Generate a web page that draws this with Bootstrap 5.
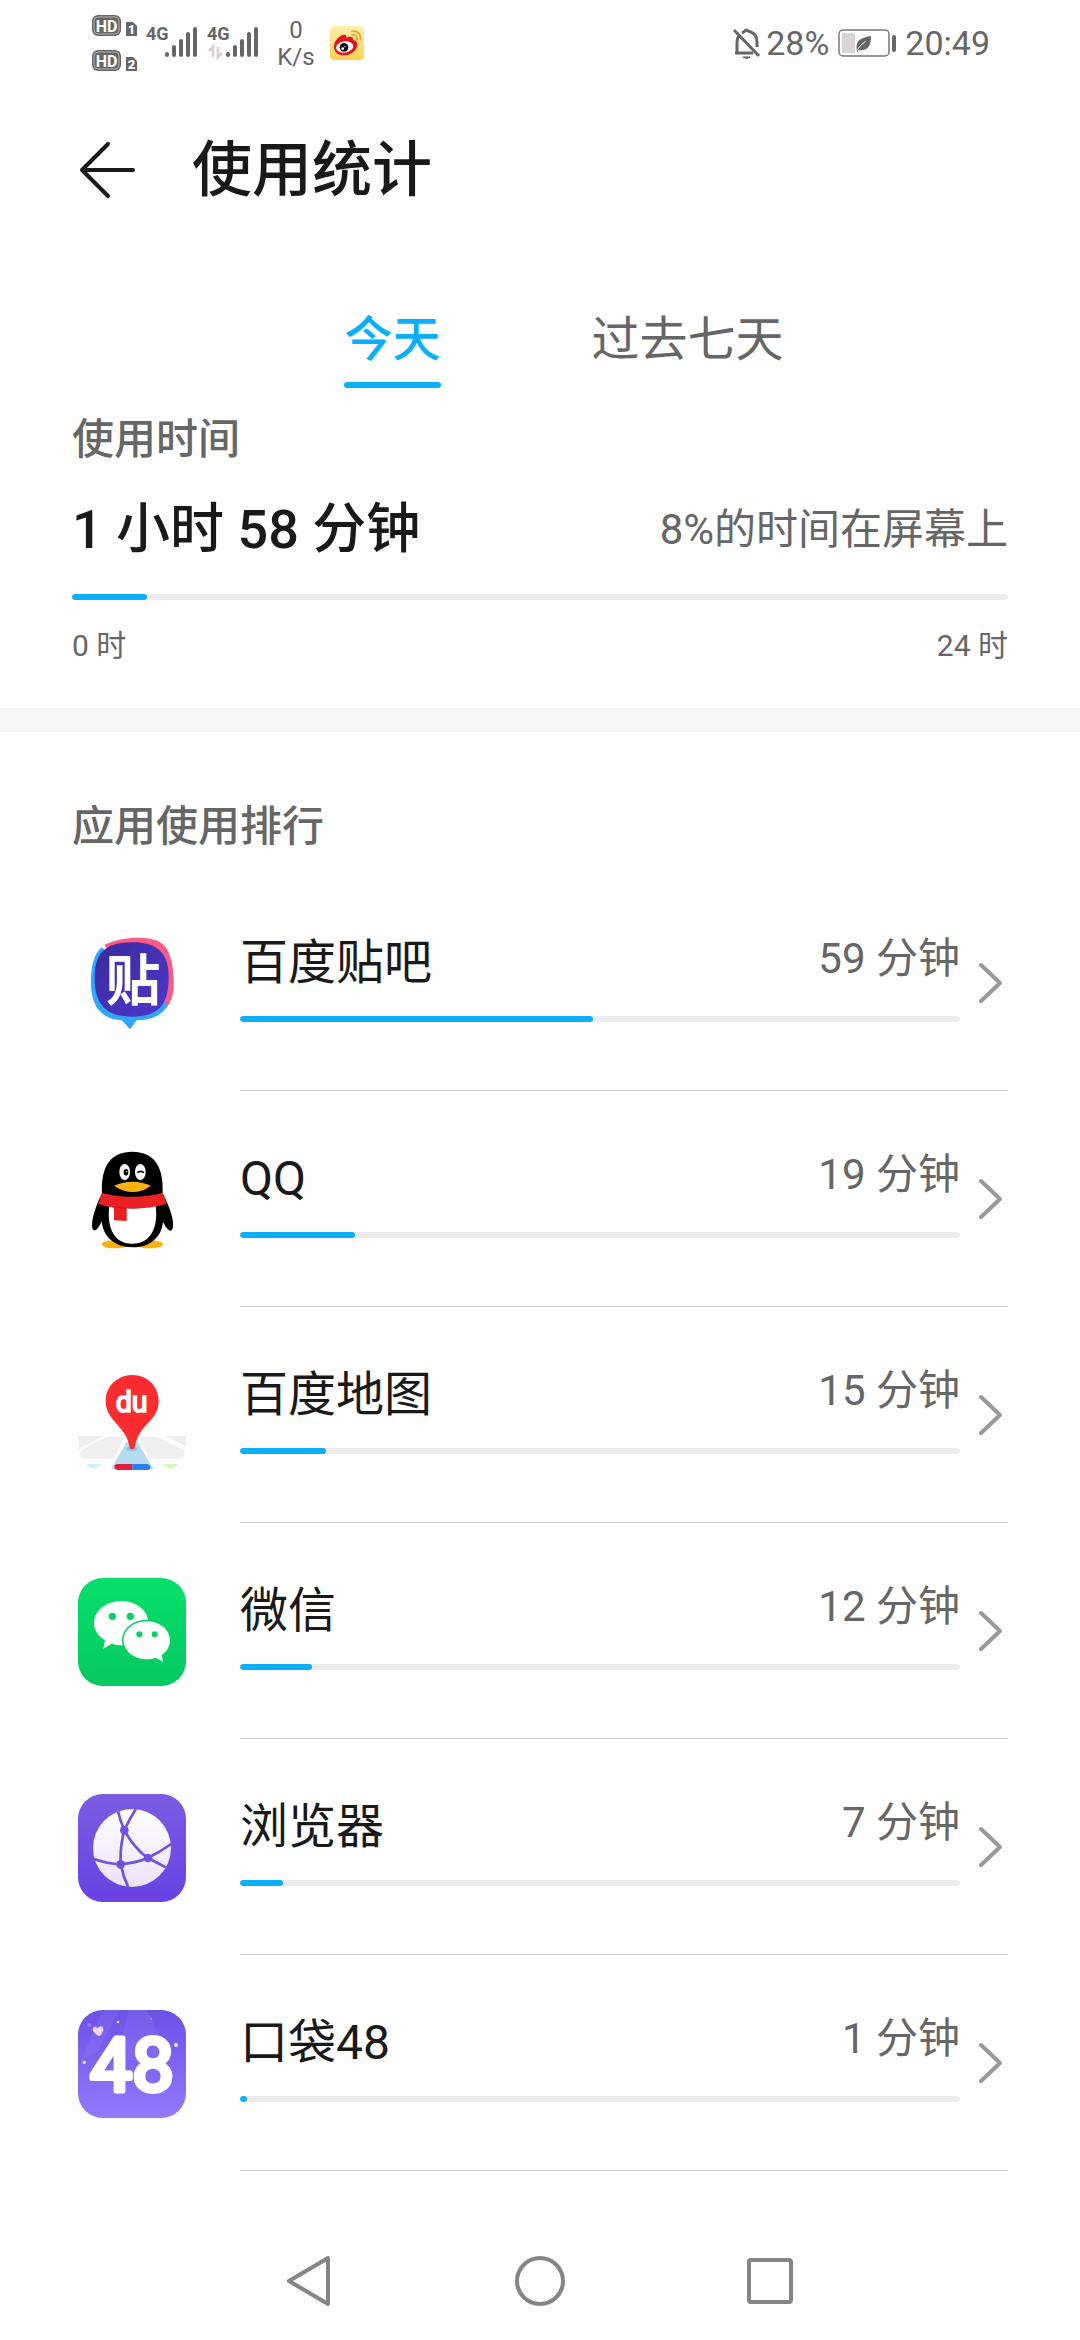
<!DOCTYPE html>
<html lang="zh-CN">
<head>
<meta charset="utf-8">
<meta name="viewport" content="width=device-width, initial-scale=1">
<title>使用统计</title>
<link href="https://cdn.jsdelivr.net/npm/bootstrap@5.3.0/dist/css/bootstrap.min.css" rel="stylesheet">
<style>
:root{--accent:#0aaefa;--ink:#191919;--dim:#666;--track:#eeebee}
body{font-family:Roboto,"Noto Sans CJK SC",sans-serif;color:var(--ink);background:#fefefe}
svg{display:block;flex:none}
svg text{font-family:Roboto,"Noto Sans CJK SC",sans-serif}
.statusbar{height:84px;padding:2px 90px 0 92px;color:var(--dim);font-size:34px;line-height:40px}
.speed{font-size:24px;line-height:27px;width:40px;padding-top:2px;margin:0 14px 0 10px}
.topbar{height:172px;padding:2px 72px 0;gap:50px}
.topbar h1{font-size:60px;line-height:80px;font-weight:500}
.tabs{padding-top:54px}
.tabs button{width:295px;font-size:48px;line-height:60px;color:var(--dim);padding:0;border:0;background:none}
.tabs span{display:inline-block;padding-bottom:12px;border-bottom:6px solid transparent}
.tabs .current{color:var(--accent);font-weight:500}
.tabs .current span{position:relative}
.tabs .current span::after{content:"";position:absolute;left:0;right:0;bottom:-6px;height:6px;border-radius:3px;background:var(--accent)}
.summary{padding:22px 72px 42px}
.caption-lg{font-size:42px;line-height:60px;font-weight:500;color:var(--dim)}
.headline{padding-top:20px}
.total{font-size:54px;line-height:80px;font-weight:500}
.note{font-size:42px;line-height:80px;color:var(--dim)}
.scale{font-size:30px;line-height:40px;color:var(--dim);margin-top:26px}
.progress{height:6px;border-radius:3px;background:var(--track)}
.progress-bar{background:var(--accent);border-radius:3px}
.summary .progress{margin-top:24px}
.divide{height:24px;background:#f6f6f6}
.ranking{padding:65px 72px 0}
.ranking h2{margin:0 0 18px}
.app{color:inherit;text-decoration:none}
.app-icon{padding:55px 54px 0 6px}
.app-body{border-bottom:1px solid #ccc}
.app-info{padding:58px 0 68px}
.app-name{font-size:48px;line-height:60px}
.app-time{font-size:42px;line-height:52px;color:var(--dim)}
.app-info .progress{margin-top:23px}
.chev{width:48px;padding-left:18px}
.navkeys{height:118px;gap:172px}
.navkeys button,.topbar button{border:0;background:none;padding:0}
</style>
</head>
<body>
<div class="d-flex flex-column min-vh-100">

<div class="statusbar d-flex align-items-center justify-content-between">
  <div class="d-flex align-items-center">
    <svg width="174" height="60" viewBox="0 0 174 60" fill="#666">
      <g id="hd1"><rect x="0" y="2" width="29" height="21" rx="6" fill="#666"/><rect x="2" y="4" width="25" height="17" rx="4" fill="none" stroke="#fff" stroke-width="1" opacity=".5"/><text x="14.500" y="18.500" font-size="16" font-weight="700" fill="#fff" text-anchor="middle">HD</text></g>
      <path d="M34 9h7l4 4v10H34z"/><text x="39.500" y="21" font-size="13" font-weight="900" fill="#fff" text-anchor="middle">1</text>
      <use href="#hd1" y="35"/>
      <path d="M34 44h7l4 4v10H34z"/><text x="39.500" y="56" font-size="13" font-weight="900" fill="#fff" text-anchor="middle">2</text>
      <text x="54" y="27" font-size="18" font-weight="700">4G</text>
      <g id="bars" stroke="#666" stroke-width="4" stroke-linecap="round"><path d="M75 41v1M82 34v8M89 28v14M96 21v21M103 16v26"/></g>
      <text x="115" y="27" font-size="18" font-weight="700">4G</text>
      <use href="#bars" x="61"/>
      <path d="M121 44V34l-4 4M126 34v10l4-4" fill="none" stroke="#d6d2d5" stroke-width="3"/>
    </svg>
    <div class="speed text-center"><div>0</div><div>K/s</div></div>
    <svg width="34" height="34" viewBox="0 0 102 102">
      <defs><linearGradient id="wb" x2="0" y2="1"><stop stop-color="#fdf0b0"/><stop offset="1" stop-color="#fbd24d"/></linearGradient></defs>
      <rect width="102" height="102" rx="12" fill="url(#wb)"/>
      <path d="M12 60c0-16 18-34 31-34 6 0 7 4 6 9 9-4 22-5 21 7 8 3 12 7 12 14 0 18-20 32-40 32S12 77 12 60z" fill="#e0161c"/>
      <ellipse cx="44" cy="63" rx="26" ry="17" fill="#fff" transform="rotate(-8 44 63)"/>
      <circle cx="42" cy="64" r="13" fill="#111"/><circle cx="38" cy="68" r="4" fill="#fff"/><circle cx="45" cy="62" r="2" fill="#fff"/>
      <path d="M66 27c10-2 17 5 15 15M66 16c17-3 28 9 25 25" fill="none" stroke="#f0a02a" stroke-width="5" stroke-linecap="round"/>
    </svg>
  </div>
  <div class="d-flex align-items-center">
    <svg width="30" height="34" viewBox="0 0 30 34" fill="none" stroke="#666" stroke-width="3" stroke-linejoin="round">
      <path d="M2 4l25 26M3 27h18M5 26V16q0-4 2-6M10 7q2-1 3-2 1-2 3 0 9 2 9 11v5"/>
      <path d="M11 31h7q-3 3-7 0z" fill="#666" stroke-width="1"/>
    </svg>
    <span class="ms-1">28%</span>
    <svg class="mx-2" width="60" height="30" viewBox="0 0 60 30">
      <rect x="2" y="2" width="50" height="26" rx="4" fill="#fff" stroke="#777" stroke-width="1.500"/>
      <rect x="5" y="5" width="13" height="20" fill="#d8d4d8"/>
      <path d="M20 23c-2-12 5-13 14-15 0 8-2 16-13 14l-1 3z" fill="#666"/><path d="M20 22q4-6 9-9" stroke="#fff" fill="none"/>
      <rect x="55" y="7" width="4" height="17" rx="2" fill="#666"/>
    </svg>
    <span>20:49</span>
  </div>
</div>

<header class="topbar d-flex align-items-center">
  <button type="button" aria-label="返回"><svg width="70" height="60" viewBox="0 0 70 60" fill="none" stroke="#191919" stroke-width="4" stroke-linecap="round" stroke-linejoin="round"><path d="M36 3L10 29l26 26M10 29h51"/></svg></button>
  <h1 class="m-0">使用统计</h1>
</header>

<nav class="tabs d-flex justify-content-center">
  <button type="button" class="current"><span>今天</span></button>
  <button type="button"><span>过去七天</span></button>
</nav>

<section class="summary">
  <div class="caption-lg">使用时间</div>
  <div class="headline d-flex justify-content-between">
    <div class="total">1 小时 58 分钟</div>
    <div class="note">8%的时间在屏幕上</div>
  </div>
  <div class="progress"><div class="progress-bar" style="width:8%"></div></div>
  <div class="scale d-flex justify-content-between"><span>0 时</span><span>24 时</span></div>
</section>
<div class="divide"></div>

<main class="ranking">
  <h2 class="caption-lg">应用使用排行</h2>

  <a class="app d-flex" href="#">
    <div class="app-icon"><svg width="108" height="108" viewBox="54 90 324 324">
      <defs><linearGradient id="tb" x2="1" y2="1"><stop stop-color="#3a2b9c"/><stop offset="1" stop-color="#4f36cc"/></linearGradient></defs>
      <path d="M133 135C180 112 245 108 285 120 325 132 338 175 341 235c2 55-10 88-45 108z" fill="#fa5a87"/>
      <path d="M125 142C98 165 92 210 93 255c2 62 28 102 92 106l25 27 20-27c48-2 78-15 92-47z" fill="#2fa8fb"/>
      <path d="M216 127c75 0 110 30 110 105 0 82-30 118-108 118-80 0-112-35-114-110-2-80 30-113 112-113z" fill="url(#tb)"/>
      <text x="219" y="299" font-size="164" font-weight="700" fill="#fff" text-anchor="middle">贴</text>
    </svg></div>
    <div class="app-body d-flex flex-grow-1">
      <div class="app-info flex-grow-1">
        <div class="d-flex justify-content-between align-items-start"><span class="app-name">百度贴吧</span><span class="app-time">59 分钟</span></div>
        <div class="progress"><div class="progress-bar" style="width:49%"></div></div>
      </div>
      <div class="chev d-flex align-items-center"><svg width="26" height="44" viewBox="0 0 26 44" fill="none" stroke="#999" stroke-width="4" stroke-linecap="round" stroke-linejoin="round"><path id="chevron" d="M3 4l19 18L3 40"/></svg></div>
    </div>
  </a>

  <a class="app d-flex" href="#">
    <div class="app-icon"><svg width="108" height="108" viewBox="54 48 324 324">
      <ellipse cx="165" cy="343" rx="40" ry="12" fill="#fdb010"/><ellipse cx="269" cy="343" rx="40" ry="12" fill="#fdb010"/>
      <path d="M126 190C122 105 155 65 217 65s95 40 91 125c18 35 34 75 31 100-2 14-9 15-16 7-6-6-10-14-14-22-3 42-35 77-92 77s-88-35-92-78c-4 9-8 17-14 23-8 8-14 4-15-8-1-22 12-64 30-99z" fill="#000"/>
      <path d="M148 225c-8 66 12 116 69 116s78-50 70-116c-40 14-100 14-139 0z" fill="#fff"/>
      <path d="M126 188c50 16 130 16 182 0l12 33c-38 12-78 15-120 14v38l-38-2v-38q-26-4-47-11z" fill="#ec1f24"/>
      <path d="M162 229q20 6 38 6" stroke="#c8151b" stroke-width="3" fill="none"/>
      <ellipse cx="194" cy="126" rx="16" ry="24" fill="#fff"/><ellipse cx="241" cy="126" rx="16" ry="24" fill="#fff"/>
      <ellipse cx="198" cy="127" rx="7" ry="10"/><circle cx="200" cy="124" r="2" fill="#fff"/>
      <path d="M232 128q10-8 20 0" fill="none" stroke="#000" stroke-width="5"/>
      <path d="M162 167q55-24 111 0-54 38-111 0z" fill="#fdb010"/>
    </svg></div>
    <div class="app-body d-flex flex-grow-1">
      <div class="app-info flex-grow-1">
        <div class="d-flex justify-content-between align-items-start"><span class="app-name">QQ</span><span class="app-time">19 分钟</span></div>
        <div class="progress"><div class="progress-bar" style="width:16%"></div></div>
      </div>
      <div class="chev d-flex align-items-center"><svg width="26" height="44" viewBox="0 0 26 44" fill="none" stroke="#999" stroke-width="4" stroke-linecap="round" stroke-linejoin="round"><use href="#chevron"/></svg></div>
    </div>
  </a>

  <a class="app d-flex" href="#">
    <div class="app-icon"><svg width="108" height="108" viewBox="54 36 324 324">
      <path d="M55 258h76L56 298zM140 260h55l-34 66H75c-14 0-15-10-14-22zM377 258h-60l60 30zM235 260h54l84 42c1 14-2 24-16 24h-88z" fill="#eee"/>
      <path d="M78 342h50l-22 15q-16-2-28-15z" fill="#d2effc"/><path d="M305 342h49q-12 14-26 15z" fill="#daf3c0"/>
      <path d="M200 275h32l49 83H153z" fill="#b3dcee"/><ellipse cx="216" cy="296" rx="16" ry="6" fill="#7ec0e0"/>
      <path d="M172 342h45v18h-45q-8-1-9-9t9-9z" fill="#dd2038"/><path d="M217 342h45q8 1 9 9t-9 9h-45z" fill="#2f7df2"/>
      <path d="M217 75c46 0 79 35 79 78 0 48-38 66-56 96-12 20-13 32-16 43-2 8-13 8-15 0-3-12-5-24-17-43-18-30-55-50-55-96 0-43 34-78 80-78z" fill="#f92d30"/>
      <text x="215" y="187" font-size="86" font-weight="400" fill="#fff" stroke="#fff" stroke-width="5" text-anchor="middle">du</text>
    </svg></div>
    <div class="app-body d-flex flex-grow-1">
      <div class="app-info flex-grow-1">
        <div class="d-flex justify-content-between align-items-start"><span class="app-name">百度地图</span><span class="app-time">15 分钟</span></div>
        <div class="progress"><div class="progress-bar" style="width:12%"></div></div>
      </div>
      <div class="chev d-flex align-items-center"><svg width="26" height="44" viewBox="0 0 26 44" fill="none" stroke="#999" stroke-width="4" stroke-linecap="round" stroke-linejoin="round"><use href="#chevron"/></svg></div>
    </div>
  </a>

  <a class="app d-flex" href="#">
    <div class="app-icon"><svg width="108" height="108" viewBox="54 54 324 324">
      <defs><linearGradient id="wx" x2="0" y2="1"><stop stop-color="#05df6b"/><stop offset="1" stop-color="#04c85f"/></linearGradient></defs>
      <rect x="54" y="54" width="324" height="324" rx="74" fill="url(#wx)"/>
      <path d="M184 123c45 0 81 29 81 66s-36 67-81 67q-16 0-29-5l-25 15 5-25c-20-13-33-30-33-52 0-37 37-66 82-66z" fill="#fff"/>
      <circle cx="157" cy="169" r="11" fill="#06d066"/><circle cx="211" cy="169" r="11" fill="#06d066"/>
      <path d="M260 184c38 0 70 25 70 57 0 18-9 33-25 44l4 20-22-12q-12 5-27 5c-38 0-69-25-69-57s31-57 69-57z" fill="#fff" stroke="#06d066" stroke-width="10" paint-order="stroke"/>
      <circle cx="238" cy="223" r="9" fill="#06d066"/><circle cx="284" cy="223" r="9" fill="#06d066"/>
    </svg></div>
    <div class="app-body d-flex flex-grow-1">
      <div class="app-info flex-grow-1">
        <div class="d-flex justify-content-between align-items-start"><span class="app-name">微信</span><span class="app-time">12 分钟</span></div>
        <div class="progress"><div class="progress-bar" style="width:10%"></div></div>
      </div>
      <div class="chev d-flex align-items-center"><svg width="26" height="44" viewBox="0 0 26 44" fill="none" stroke="#999" stroke-width="4" stroke-linecap="round" stroke-linejoin="round"><use href="#chevron"/></svg></div>
    </div>
  </a>

  <a class="app d-flex" href="#">
    <div class="app-icon"><svg width="108" height="108" viewBox="54 42 324 324">
      <defs><linearGradient id="br" x2="0" y2="1"><stop stop-color="#7d5ce2"/><stop offset="1" stop-color="#6842e2"/></linearGradient>
      <linearGradient id="gl" x2="0" y2="1"><stop stop-color="#fff"/><stop offset="1" stop-color="#ece2fb"/></linearGradient>
      <clipPath id="gc"><circle cx="216" cy="204" r="118"/></clipPath></defs>
      <rect x="54" y="42" width="324" height="324" rx="74" fill="url(#br)"/>
      <circle cx="216" cy="204" r="117" fill="url(#gl)"/>
      <g clip-path="url(#gc)" fill="none" stroke="#7150df" stroke-width="8"><path d="M173 90q8 34 20 61 16-36 36-66M193 151q-14 52-11 102 8 38 24 72M193 151q30 54 71 83 36-18 74-45M95 235q46 17 87 18 44-4 82-19 30 16 60 31"/></g>
      <g fill="#7150df"><circle cx="193" cy="151" r="13"/><circle cx="182" cy="253" r="13"/><circle cx="264" cy="234" r="13"/></g>
    </svg></div>
    <div class="app-body d-flex flex-grow-1">
      <div class="app-info flex-grow-1">
        <div class="d-flex justify-content-between align-items-start"><span class="app-name">浏览器</span><span class="app-time">7 分钟</span></div>
        <div class="progress"><div class="progress-bar" style="width:6%"></div></div>
      </div>
      <div class="chev d-flex align-items-center"><svg width="26" height="44" viewBox="0 0 26 44" fill="none" stroke="#999" stroke-width="4" stroke-linecap="round" stroke-linejoin="round"><use href="#chevron"/></svg></div>
    </div>
  </a>

  <a class="app d-flex" href="#">
    <div class="app-icon"><svg width="108" height="108" viewBox="54 45 324 324">
      <defs><linearGradient id="pk" x2="0" y2="1"><stop stop-color="#6c51e6"/><stop offset="1" stop-color="#9379fb"/></linearGradient></defs>
      <rect x="54" y="45" width="324" height="324" rx="74" fill="url(#pk)"/>
      <path d="M130 45h50L110 170 60 200zM205 45h55l75 150H175z" fill="#a08bff" opacity=".18"/>
      <path d="M118 124c-12-7-20-13-20-21 0-9 10-11 15-3 3-8 15-9 17 1 1 8-4 15-12 23z" fill="#f6d4ee"/>
      <circle cx="88" cy="90" r="6" fill="#9379fb"/>
      <g fill="#efe8ff"><circle cx="174" cy="81" r="4"/><circle cx="73" cy="202" r="5"/><circle cx="348" cy="150" r="6"/><circle cx="273" cy="71" r="3" opacity=".5"/></g>
      <text x="216" y="287" font-size="224" font-weight="400" fill="#fff" stroke="#fff" stroke-width="15" stroke-linejoin="round" text-anchor="middle">48</text>
    </svg></div>
    <div class="app-body d-flex flex-grow-1">
      <div class="app-info flex-grow-1">
        <div class="d-flex justify-content-between align-items-start"><span class="app-name">口袋48</span><span class="app-time">1 分钟</span></div>
        <div class="progress"><div class="progress-bar" style="width:1%"></div></div>
      </div>
      <div class="chev d-flex align-items-center"><svg width="26" height="44" viewBox="0 0 26 44" fill="none" stroke="#999" stroke-width="4" stroke-linecap="round" stroke-linejoin="round"><use href="#chevron"/></svg></div>
    </div>
  </a>
</main>

<footer class="navkeys d-flex justify-content-center align-items-center mt-auto">
  <button type="button" aria-label="返回"><svg width="58" height="58" viewBox="0 0 58 58" fill="none" stroke="#858585" stroke-width="4" stroke-linejoin="round"><path d="M47 6v46L8 29z"/></svg></button>
  <button type="button" aria-label="主页"><svg width="58" height="58" viewBox="0 0 58 58" fill="none" stroke="#858585" stroke-width="4"><circle cx="29" cy="29" r="23"/></svg></button>
  <button type="button" aria-label="最近任务"><svg width="58" height="58" viewBox="0 0 58 58" fill="none" stroke="#858585" stroke-width="4"><rect x="8" y="8" width="42" height="42" rx="2"/></svg></button>
</footer>
</div>
<script src="https://cdn.jsdelivr.net/npm/bootstrap@5.3.0/dist/js/bootstrap.bundle.min.js"></script>
</body>
</html>
